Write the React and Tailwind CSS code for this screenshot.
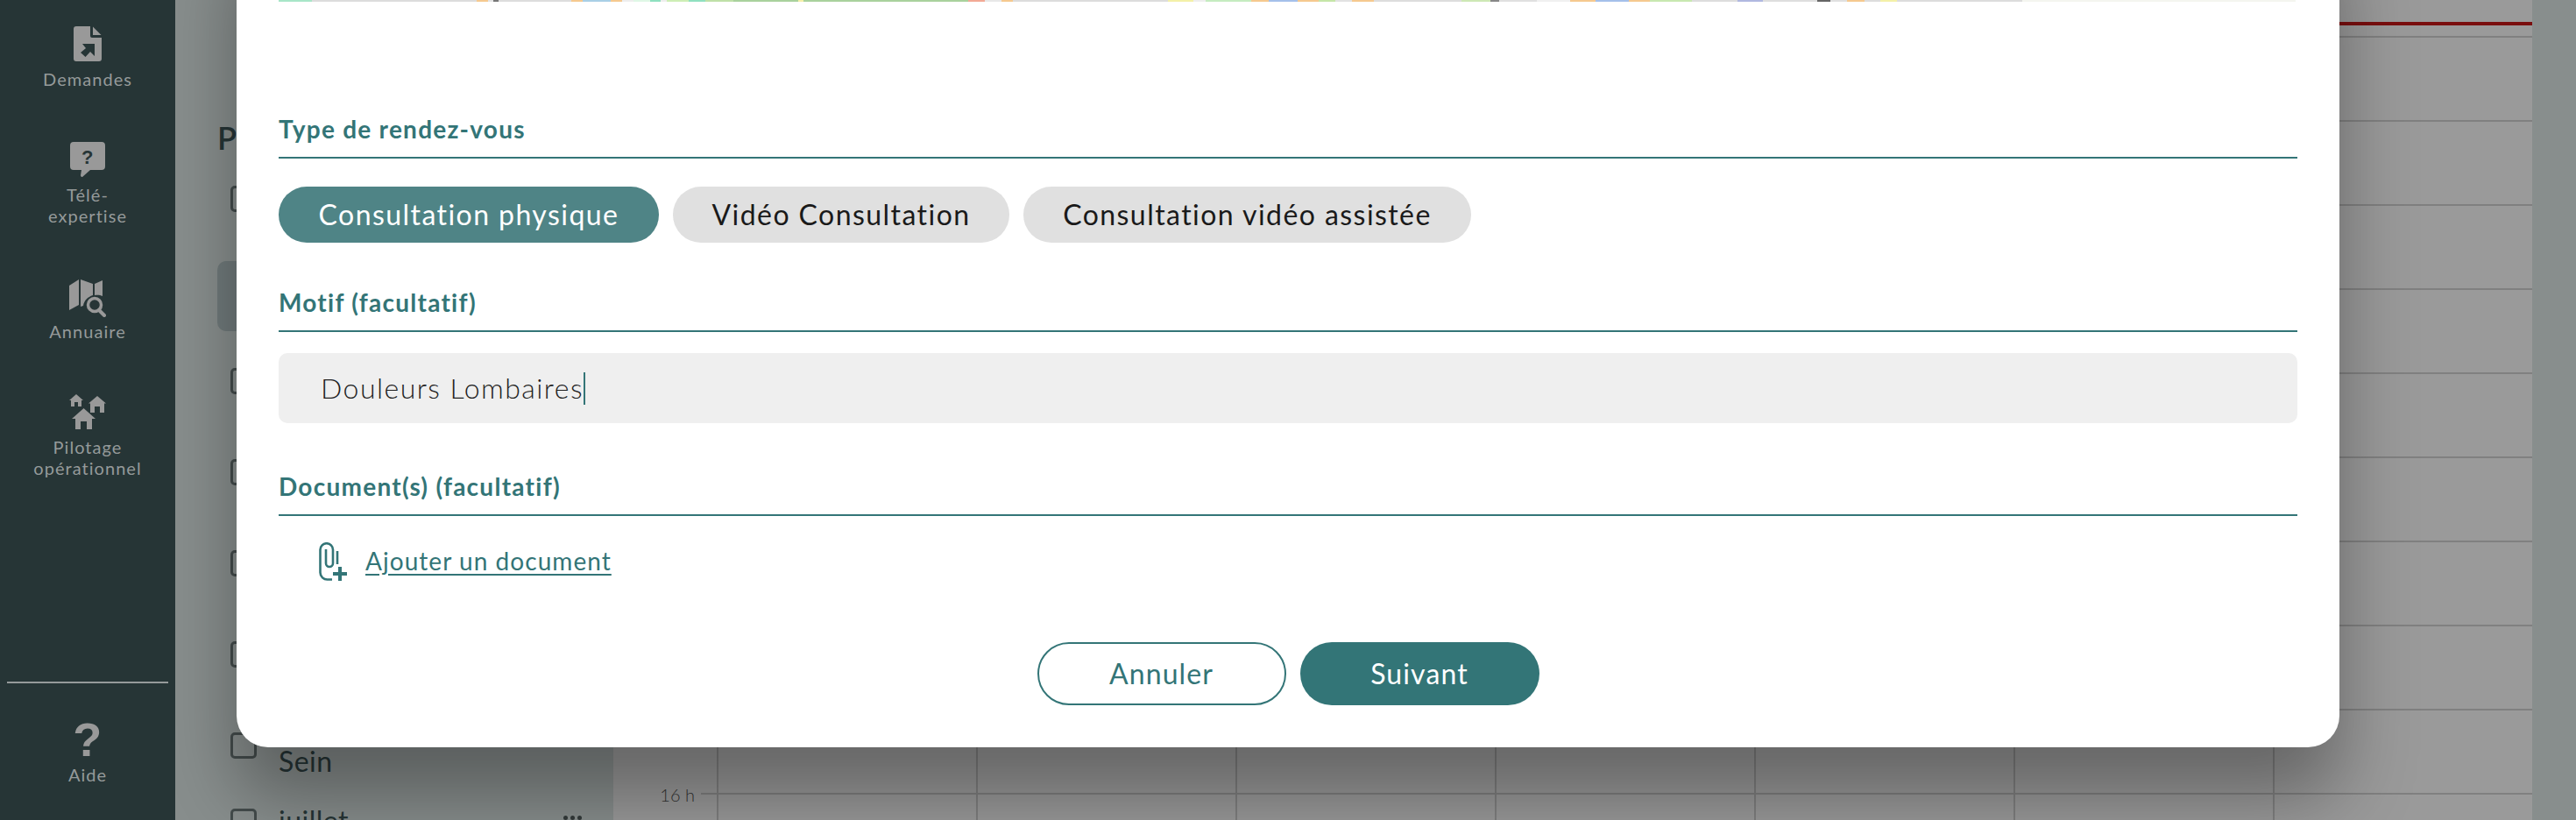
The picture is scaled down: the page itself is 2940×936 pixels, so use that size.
const TEAL = '#337577';

const stripColors = [
  [320, 358, '#a8e6c8'], [358, 546, '#dcdcdc'], [546, 559, '#f5c98f'], [559, 565, '#e4e4e4'], [565, 571, '#777777'],
  [571, 654, '#dddddd'], [654, 667, '#f5c98f'], [667, 699, '#a9cfe6'], [699, 712, '#f5c98f'], [712, 725, '#eeeeee'],
  [725, 744, '#dff7e6'], [744, 756, '#8fe0c0'], [756, 763, '#eeeeee'], [763, 788, '#cdeeb5'], [788, 807, '#90e0c0'],
  [807, 839, '#bfe0a8'], [839, 913, '#a9d19d'], [913, 919, '#f5efa8'], [919, 1107, '#a9d19d'], [1107, 1126, '#f2a995'],
  [1126, 1145, '#e8e8e8'], [1145, 1158, '#f5c98f'], [1158, 1335, '#dcdcdc'], [1335, 1364, '#f3f0a8'], [1364, 1378, '#eeeeee'],
  [1378, 1430, '#c5ecc0'], [1430, 1450, '#f5c98f'], [1450, 1483, '#a5c0ea'], [1483, 1507, '#f5c98f'], [1507, 1526, '#c5e6a8'],
  [1526, 1545, '#e2e2e2'], [1545, 1570, '#f5c98f'], [1570, 1670, '#dddddd'], [1670, 1703, '#cde8b5'], [1703, 1713, '#888888'],
  [1713, 1756, '#e0e0e0'], [1756, 1794, '#f0f0f0'], [1794, 1823, '#f5c98f'], [1823, 1861, '#a5c0ea'], [1861, 1885, '#f5c98f'],
  [1885, 1933, '#c8e8b0'], [1933, 1985, '#dddddd'], [1985, 2014, '#b0b8e0'], [2014, 2076, '#dedede'], [2076, 2091, '#666666'],
  [2091, 2110, '#e0e0e0'], [2110, 2130, '#f5c98f'], [2130, 2148, '#dddddd'], [2148, 2167, '#f3f0a8'], [2167, 2310, '#dcdcdc'],
  [2310, 2622, '#f4f5ef'],
];

function FileIcon() {
  return (
    <svg width="32" height="40" viewBox="0 0 32 40" fill="#999999">
      <path d="M3 0h16v11a2 2 0 0 0 2 2h11v24a3 3 0 0 1-3 3H3a3 3 0 0 1-3-3V3a3 3 0 0 1 3-3z" />
      <path d="M22 0.5L31.5 10H22z" />
      <path d="M10 20h14v14l-5-5-5.500 6L8 30l6-5z" fill="#263536" />
    </svg>
  );
}

function BubbleIcon() {
  return (
    <svg width="40" height="40" viewBox="0 0 40 40" fill="#999999">
      <path d="M4 0h32a4 4 0 0 1 4 4v24a4 4 0 0 1-4 4H23L14 40c-1 0-2-.5-2-2l1-6H4a4 4 0 0 1-4-4V4a4 4 0 0 1 4-4z" />
      <text x="20" y="25" textAnchor="middle" fontFamily="Liberation Sans, sans-serif" fontWeight="700" fontSize="22" fill="#263536">?</text>
    </svg>
  );
}

function MapIcon() {
  return (
    <svg width="42" height="44" viewBox="0 0 42 44" fill="#999999">
      <path d="M0 8L11 1v29L0 36z" />
      <path d="M13 1l14 5v13c-6 2-10 6-11 12l-3 1z" />
      <path d="M29 6l9-4v18c-3-1.500-6-1.500-9-1z" />
      <circle cx="29" cy="30" r="7.500" fill="none" stroke="#999999" strokeWidth="3.500" />
      <path d="M34 36l6 6" stroke="#999999" strokeWidth="4" strokeLinecap="round" />
    </svg>
  );
}

function HousesIcon() {
  return (
    <svg width="42" height="40" viewBox="0 0 42 40" fill="#999999">
      <path d="M8 0l8 7h-2v7h-4V9H6v5H2V7H0z" />
      <path d="M32 2l10 8.500h-2V21h-5v-7h-6v7h-5V10.500h-2z" />
      <path d="M16.500 16L30 28h-4v12h-6v-9h-7v9H7V28H3z" />
    </svg>
  );
}

function ClipPlusIcon() {
  return (
    <svg width="33" height="44" viewBox="0 0 33 44" fill="none" stroke={TEAL} strokeWidth="2.600">
      <path d="M15 42.500H10a8 8 0 0 1-8.500-8V8.500a7 7 0 0 1 14.500 0V24a4 4 0 0 1-8 0V8" />
      <path d="M21 10v15" />
      <path d="M24 28v16M16 36h16" strokeWidth="4" />
    </svg>
  );
}

function NavItem({ icon, lines }) {
  return (
    <div className="flex flex-col items-center gap-2">
      <div className="h-10 flex items-start justify-center">{icon}</div>
      <div className="text-center text-[20px] leading-6 tracking-[0.052em] text-[#959a9a]">
        {lines.map((l) => <div key={l}>{l}</div>)}
      </div>
    </div>
  );
}

function Box() {
  return <span className="block w-[30px] h-[30px] shrink-0 rounded-[5px] border-[3px] border-[#444c4c]" />;
}

function Row({ label, h }) {
  return (
    <div className={`flex items-start gap-[25px] pl-[15px] ${h}`}>
      <Box />
      {label && <span className="mt-[13px] text-[32px] leading-10 text-[#263536]">{label}</span>}
    </div>
  );
}

function Label({ children }) {
  return (
    <div className="pb-[12px] -mt-[1px] border-b-2 border-[#337577] text-[28px] leading-10 font-bold tracking-[0.045em] text-[#337577]">
      {children}
    </div>
  );
}

const pill = 'h-[64px] rounded-full text-[32px] tracking-[0.045em] flex items-center justify-center';

export default function App() {
  const hours = ['8 h', '9 h', '10 h', '11 h', '12 h', '13 h', '14 h', '15 h', '16 h'];

  return (
    <div className="relative w-[2940px] h-[936px] overflow-hidden flex font-['Lato','Liberation_Sans',sans-serif] tracking-[0.03em]">
      {/* sidebar */}
      <aside className="relative z-10 w-[200px] shrink-0 h-full bg-[#263536] flex flex-col items-center pt-[30px] pb-[40px]">
        <div className="flex flex-col items-center gap-[60px]">
          <NavItem icon={<FileIcon />} lines={['Demandes']} />
          <NavItem icon={<BubbleIcon />} lines={['Télé-', 'expertise']} />
          <NavItem icon={<MapIcon />} lines={['Annuaire']} />
          <NavItem icon={<HousesIcon />} lines={['Pilotage', 'opérationnel']} />
        </div>
        <div className="mt-auto mb-[44px] w-[184px] h-[2px] bg-[#959a9a]" />
        <div className="flex flex-col items-center gap-2">
          <div className="h-10 flex items-center justify-center text-[#999999] text-[54px] font-bold leading-10 font-['Liberation_Sans',sans-serif]">?</div>
          <div className="text-[20px] leading-6 tracking-[0.052em] text-[#959a9a]">Aide</div>
        </div>
      </aside>

      {/* left panel behind the modal */}
      <section className="w-[500px] shrink-0 h-full bg-[#888e8d] pt-[135px] pl-[48px] pr-[36px]">
        <div className="h-[77px] text-[36px] leading-[44px] font-semibold text-[#263536]">P</div>
        <Row h="h-[86px]" />
        <div className="h-[80px] mb-[42px] rounded-[10px] bg-[#707a7b]" />
        <Row h="h-[104px]" />
        <Row h="h-[104px]" />
        <Row h="h-[104px]" />
        <Row h="h-[104px]" />
        <Row label="Sein" h="h-[87px]" />
        <div className="flex items-start pl-[15px] gap-[25px]">
          <Box />
          <span className="-mt-[6px] text-[32px] leading-10 text-[#263536]">juillet</span>
          <span className="ml-auto mt-[8px] flex gap-[3px]">
            <i className="block w-[5px] h-[5px] rounded-full bg-[#333a3a]" />
            <i className="block w-[5px] h-[5px] rounded-full bg-[#333a3a]" />
            <i className="block w-[5px] h-[5px] rounded-full bg-[#333a3a]" />
          </span>
        </div>
      </section>

      {/* calendar behind the modal */}
      <section className="relative w-[2190px] shrink-0 h-full bg-[#9a9a9a] flex flex-col">
        <div className="absolute left-0 right-0 top-[25px] h-[4px] bg-[#7a0e0e]" />
        <div className="h-[43px] ml-[100px] border-b-2 border-[#808080] shrink-0" />
        {hours.map((h) => (
          <div key={h} className="h-[96px] shrink-0 ml-[100px] border-b-2 border-[#808080] relative">
            <span className="absolute right-[2097px] bottom-[-14px] whitespace-nowrap text-[20px] leading-6 font-light tracking-normal text-[#333333]">{h}</span>
          </div>
        ))}
        <div className="absolute inset-0 pl-[118px] grid grid-cols-[296px_296px_296px_296px_296px_296px_295px]">
          {[0, 1, 2, 3, 4, 5, 6].map((c) => (
            <div key={c} className="border-l-2 border-[#808080]" />
          ))}
        </div>
      </section>

      <div className="w-[50px] shrink-0 h-full bg-[#888e8d]" />

      {/* modal */}
      <div className="absolute left-[270px] top-[-100px] w-[2400px] h-[953px] bg-white rounded-b-[36px] shadow-[0_56px_84px_rgba(0,0,0,0.34)] px-[48px] pt-[100px]">
        <div className="flex h-[2px]">
          {stripColors.map(([a, b, c]) => (
            <span key={a} className="h-full" style={{ width: b - a, backgroundColor: c }} />
          ))}
        </div>

        <div className="mt-[126px]"><Label>Type de rendez-vous</Label></div>
        <div className="mt-[32px] flex gap-[16px]">
          <span className={`${pill} w-[434px] bg-[#4f8486] text-white`}>Consultation physique</span>
          <span className={`${pill} w-[384px] bg-[#e0e0e0] text-[#1a1a1a]`}>Vidéo Consultation</span>
          <span className={`${pill} w-[511px] bg-[#e0e0e0] text-[#1a1a1a]`}>Consultation vidéo assistée</span>
        </div>

        <div className="mt-[49px]"><Label>Motif (facultatif)</Label></div>
        <div className="mt-[24px] h-[80px] rounded-[10px] bg-[#efefef] pl-[48px] flex items-center text-[32px] font-light tracking-[0.046em] text-[#1f1f1f]">
          <span>Douleurs Lombaires</span>
          <span className="w-[2px] h-[37px] bg-[#337577]" />
        </div>

        <div className="mt-[53px]"><Label>Document(s) (facultatif)</Label></div>
        <div className="mt-[30px] pl-[46px] flex items-center gap-[20px]">
          <ClipPlusIcon />
          <span className="-mt-[2px] text-[28px] leading-10 tracking-[0.0375em] text-[#337577] underline underline-offset-4">Ajouter un document</span>
        </div>

        <div className="mt-[70px] flex justify-center gap-[16px]">
          <span className="h-[72px] w-[284px] rounded-full border-2 border-[#337577] bg-white text-[#337577] text-[32px] tracking-[0.035em] flex items-center justify-center">Annuler</span>
          <span className="h-[72px] w-[273px] rounded-full bg-[#337577] text-white text-[32px] tracking-[0.035em] flex items-center justify-center">Suivant</span>
        </div>
      </div>
    </div>
  );
}
